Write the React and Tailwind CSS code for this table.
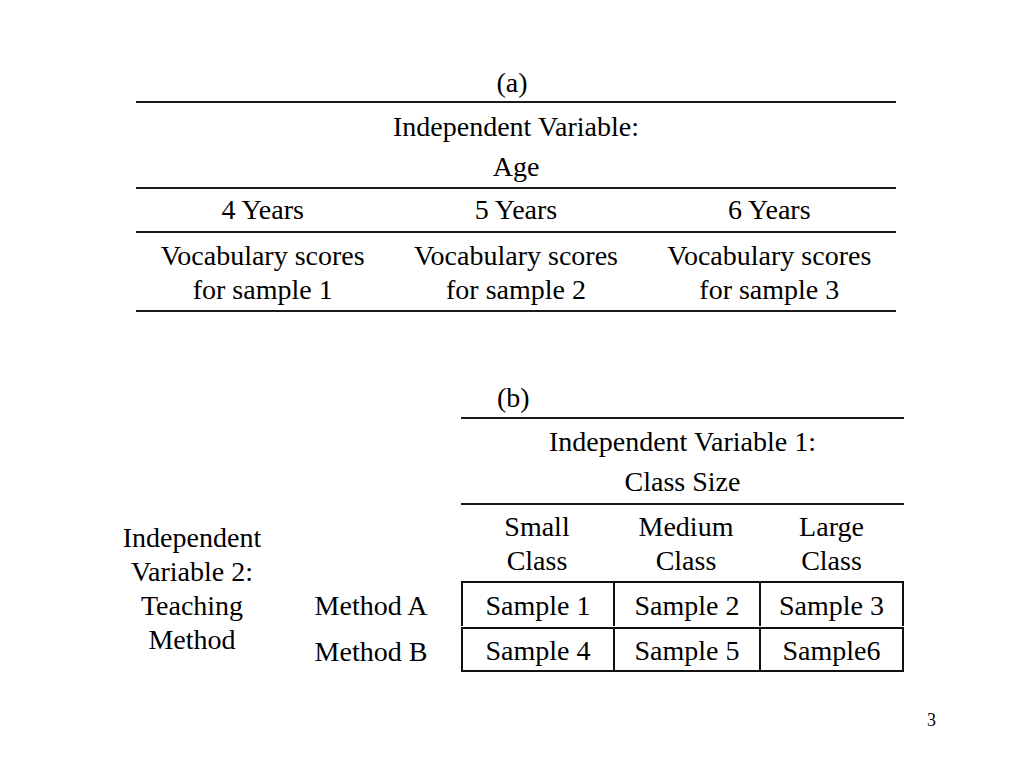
import React from "react";

const yearCols = [
  { label: "4 Years", sample: "for sample 1" },
  { label: "5 Years", sample: "for sample 2" },
  { label: "6 Years", sample: "for sample 3" },
];

function AgeTable() {
  return (
    <div className="ml-[136px] w-[760px] pt-[67px]">
      <div className="text-center leading-[32px] pr-[8px] pb-[2px]">(a)</div>
      <div className="border-t-2 border-[#1a1a1a] pt-[4px] text-center leading-[40px]">
        <div>Independent Variable:</div>
        <div>Age</div>
      </div>
      <div className="grid grid-cols-3 border-t-2 border-[#1a1a1a] leading-[42px] text-center">
        {yearCols.map((c) => (
          <div key={c.label}>{c.label}</div>
        ))}
      </div>
      <div className="grid grid-cols-3 border-t-2 border-b-2 border-[#1a1a1a] pt-[6px] pb-[3px] leading-[34px] text-center">
        {yearCols.map((c) => (
          <div key={c.label}>
            <div>Vocabulary scores</div>
            <div>{c.sample}</div>
          </div>
        ))}
      </div>
    </div>
  );
}

function ClassTable() {
  const cell = "pt-[2px] border-t-2 border-l-2 border-[#111] flex items-center justify-center";
  return (
    <div className="ml-[92px] mt-[70px] grid grid-cols-[200px_169px_152px_146px_145px]">
      {/* caption + header */}
      <div className="col-start-3 col-span-3">
        <div className="pl-[36px] leading-[32px] mb-[3px]">(b)</div>
        <div className="border-t-2 border-b-2 border-[#1a1a1a] pt-[3px] pb-[1px] text-center leading-[40px]">
          <div>Independent Variable 1:</div>
          <div>Class Size</div>
        </div>
      </div>

      {/* left label + column headers */}
      <div className="col-start-1 row-start-2 row-span-3 flex flex-col justify-center text-center leading-[34px]">
        <div>Independent</div>
        <div>Variable 2:</div>
        <div>Teaching</div>
        <div>Method</div>
      </div>
      <div className="col-start-3 row-start-2 pt-[5px] pb-[3px] text-center leading-[34px]">
        <div>Small</div>
        <div>Class</div>
      </div>
      <div className="col-start-4 row-start-2 pt-[5px] pb-[3px] text-center leading-[34px]">
        <div>Medium</div>
        <div>Class</div>
      </div>
      <div className="col-start-5 row-start-2 pt-[5px] pb-[3px] text-center leading-[34px]">
        <div>Large</div>
        <div>Class</div>
      </div>

      {/* Method A */}
      <div className="col-start-2 row-start-3 flex items-center justify-center pr-[11px] pt-[4px]">
        Method A
      </div>
      <div className={`col-start-3 row-start-3 h-[45px] ${cell}`}>Sample 1</div>
      <div className={`col-start-4 row-start-3 h-[45px] ${cell}`}>Sample 2</div>
      <div className={`col-start-5 row-start-3 h-[45px] border-r-2 ${cell}`}>Sample 3</div>

      {/* Method B */}
      <div className="col-start-2 row-start-4 flex items-center justify-center pr-[11px] pt-[4px]">
        Method B
      </div>
      <div className={`col-start-3 row-start-4 h-[45px] border-b-2 ${cell}`}>Sample 4</div>
      <div className={`col-start-4 row-start-4 h-[45px] border-b-2 ${cell}`}>Sample 5</div>
      <div className={`col-start-5 row-start-4 h-[45px] border-b-2 border-r-2 ${cell}`}>Sample6</div>
    </div>
  );
}

export default function App() {
  return (
    <div
      className="w-[1024px] h-[768px] bg-white text-black text-[28px] overflow-hidden"
      style={{ fontFamily: '"Liberation Serif", "Times New Roman", serif' }}
    >
      <AgeTable />
      <ClassTable />
      <div className="flex justify-end pr-[88px] mt-[37px] text-[18px] leading-[20px]">3</div>
    </div>
  );
}
